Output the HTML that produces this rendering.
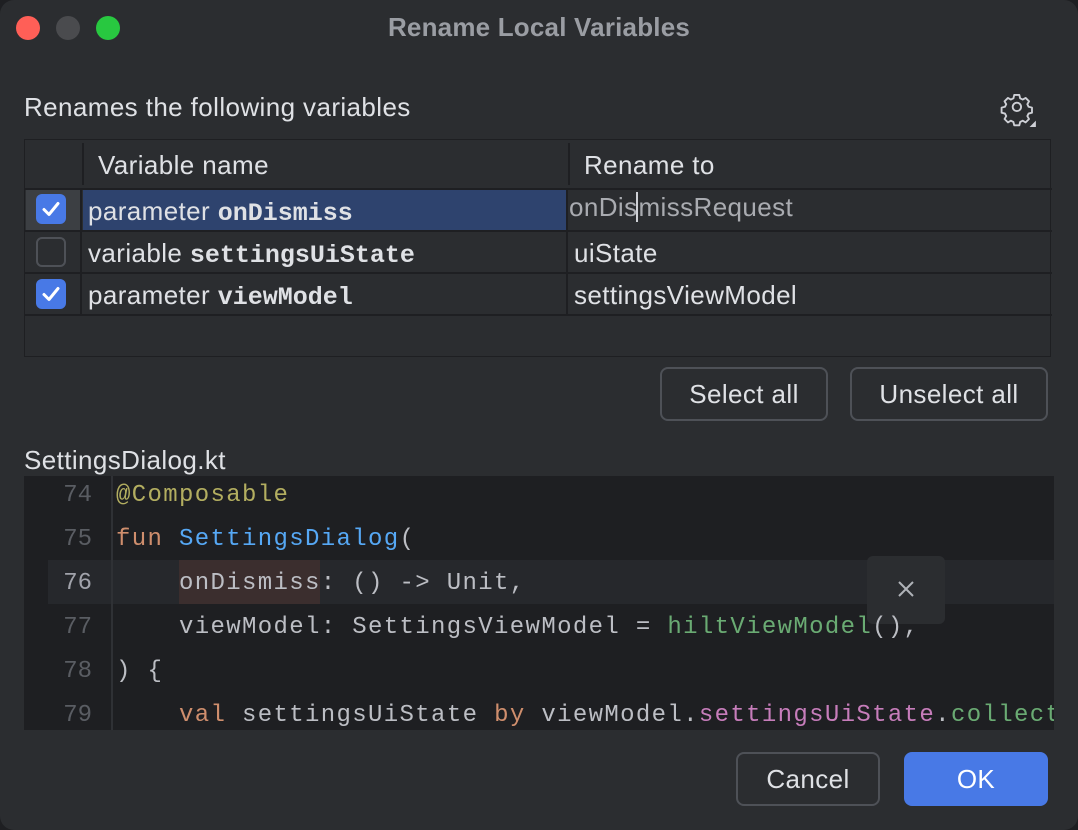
<!DOCTYPE html>
<html><head><style>
body{margin:0;width:1078px;height:830px;background:#1e1f22;overflow:hidden;font-family:"Liberation Sans",sans-serif;}
.win{position:absolute;left:0;top:0;width:1078px;height:830px;background:#2b2d30;border-radius:14px;overflow:hidden;}
.dot{position:absolute;top:16px;width:24px;height:24px;border-radius:50%;}
.t{position:absolute;color:#dfe1e5;font-size:26px;letter-spacing:0.4px;white-space:nowrap;}
.tbl{position:absolute;left:24px;top:139px;width:1027px;height:218px;border:1px solid #1e1f22;background:#2b2d30;box-sizing:border-box;}
.hl{position:absolute;background:#1e1f22;}
.cb{position:absolute;left:36px;width:30px;height:30px;border-radius:6px;box-sizing:border-box;}
.on{background:#4879e6;}
.off{border:2px solid #4e5157;}
.mono{font-family:"Liberation Mono",monospace;font-weight:bold;letter-spacing:0;font-size:25px;}
.code{position:absolute;left:24px;top:476px;width:1030px;height:254px;background:#1e1f22;overflow:hidden;}
.ln{position:absolute;left:0;width:68px;text-align:right;color:#5a5d63;font-family:"Liberation Mono",monospace;font-size:24px;}
.cl{position:absolute;left:92px;font-family:"Liberation Mono",monospace;font-size:24px;letter-spacing:1.35px;color:#bcbec4;white-space:pre;}
.btn{position:absolute;height:54px;border-radius:8px;box-sizing:border-box;font-size:26px;letter-spacing:0.4px;color:#dfe1e5;display:flex;align-items:center;justify-content:center;}
</style></head><body>
<div class="win">
<div class="dot" style="left:16px;background:#ff5f57"></div>
<div class="dot" style="left:56px;background:#4a4b4e"></div>
<div class="dot" style="left:96px;background:#28c840"></div>
<div class="t" style="left:0;width:1078px;text-align:center;top:12px;font-weight:bold;color:#9a9da3;letter-spacing:0.2px">Rename Local Variables</div>
<div class="t" style="left:24px;top:92px;">Renames the following variables</div>
<svg style="position:absolute;left:1000px;top:90px" width="38" height="38" viewBox="0 0 36 36"><path d="M15 4h6l1 4 3 1.5 3.5-2 4 4-2 3.5 1.5 3 4 1v6l-4 1-1.5 3 2 3.5-4 4-3.5-2-3 1.5-1 4h-6l-1-4-3-1.5-3.5 2-4-4 2-3.5-1.5-3-4-1v-6l4-1 1.5-3-2-3.5 4-4 3.5 2 3-1.5z" transform="translate(1.5 1.5) scale(0.8)" fill="none" stroke="#ced0d6" stroke-width="2.2" stroke-linejoin="round"/><circle cx="16" cy="16" r="4" fill="none" stroke="#ced0d6" stroke-width="1.8"/><path d="M34 29v6h-6z" fill="#ced0d6"/></svg>
<div class="tbl">
 <div class="hl" style="left:57px;top:3px;width:2px;height:42px;background:#1e1f22"></div>
 <div class="hl" style="left:543px;top:3px;width:2px;height:42px"></div>
 <div class="hl" style="left:0;top:48px;width:1027px;height:2px"></div>
 <div class="hl" style="left:0;top:90px;width:1027px;height:2px"></div>
 <div class="hl" style="left:0;top:132px;width:1027px;height:2px"></div>
 <div class="hl" style="left:0;top:174px;width:1027px;height:2px"></div>
 <div class="hl" style="left:55px;top:50px;width:2px;height:124px"></div>
 <div class="hl" style="left:541px;top:50px;width:2px;height:124px"></div>
 <div style="position:absolute;left:1px;top:50px;width:54px;height:40px;background:#3c3f43"></div>
 <div style="position:absolute;left:58px;top:50px;width:483px;height:40px;background:#2e436e"></div>
</div>
<div class="t" style="left:98px;top:150px;">Variable name</div>
<div class="t" style="left:584px;top:150px;">Rename to</div>
<div class="cb on" style="top:194px"><svg width="30" height="30"><path d="M8 15.5l5 5 9-11" fill="none" stroke="#fff" stroke-width="3" stroke-linecap="round" stroke-linejoin="round"/></svg></div>
<div class="cb off" style="top:237px"></div>
<div class="cb on" style="top:279px"><svg width="30" height="30"><path d="M8 15.5l5 5 9-11" fill="none" stroke="#fff" stroke-width="3" stroke-linecap="round" stroke-linejoin="round"/></svg></div>
<div class="t" style="left:88px;top:196px;">parameter <span class="mono">onDismiss</span></div>
<div class="t" style="left:88px;top:238px;">variable <span class="mono">settingsUiState</span></div>
<div class="t" style="left:88px;top:280px;">parameter <span class="mono">viewModel</span></div>
<div class="t" style="left:569px;top:192px;color:#a9abb0;">onDis<span style="border-left:2px solid #cfd1d6;margin-left:-1px"></span>missRequest</div>
<div class="t" style="left:574px;top:238px;">uiState</div>
<div class="t" style="left:574px;top:280px;">settingsViewModel</div>
<div class="btn" style="left:660px;top:367px;width:168px;border:2px solid #4e5157;">Select all</div>
<div class="btn" style="left:850px;top:367px;width:198px;border:2px solid #4e5157;">Unselect all</div>
<div class="t" style="left:24px;top:445px;">SettingsDialog.kt</div>
<div class="code">
 <div style="position:absolute;left:24px;top:84px;width:1006px;height:44px;background:#26282c"></div>
 <div style="position:absolute;left:87px;top:0;width:2px;height:254px;background:#2f3135"></div>
 <div style="position:absolute;left:155px;top:84px;width:141px;height:44px;background:#3b2e2e"></div>
 <div style="position:absolute;left:843px;top:80px;width:78px;height:68px;background:#2b2d30;border-radius:6px"></div>
 <svg style="position:absolute;left:873px;top:104px" width="18" height="18"><path d="M2 2l14 14M16 2L2 16" stroke="#b0b3b8" stroke-width="2"/></svg>
 <div class="ln" style="top:6px">74</div>
 <div class="ln" style="top:50px">75</div>
 <div class="ln" style="top:94px;color:#a1a3ab">76</div>
 <div class="ln" style="top:138px">77</div>
 <div class="ln" style="top:182px">78</div>
 <div class="ln" style="top:226px">79</div>
 <div class="cl" style="top:6px;color:#b3ae60">@Composable</div>
 <div class="cl" style="top:50px"><span style="color:#cf8e6d">fun</span> <span style="color:#56a8f5">SettingsDialog</span>(</div>
 <div class="cl" style="top:94px">    onDismiss: () -&gt; Unit,</div>
 <div class="cl" style="top:138px">    viewModel: SettingsViewModel = <span style="color:#6aab73">hiltViewModel</span>(),</div>
 <div class="cl" style="top:182px">) {</div>
 <div class="cl" style="top:226px">    <span style="color:#cf8e6d">val</span> settingsUiState <span style="color:#cf8e6d">by</span> viewModel.<span style="color:#c77dbb">settingsUiState</span>.<span style="color:#6aab73">collectAs</span></div>
</div>
<div class="btn" style="left:736px;top:752px;width:144px;border:2px solid #4e5157;">Cancel</div>
<div class="btn" style="left:904px;top:752px;width:144px;background:#4879e6;color:#fff;">OK</div>
</div>
</body></html>
